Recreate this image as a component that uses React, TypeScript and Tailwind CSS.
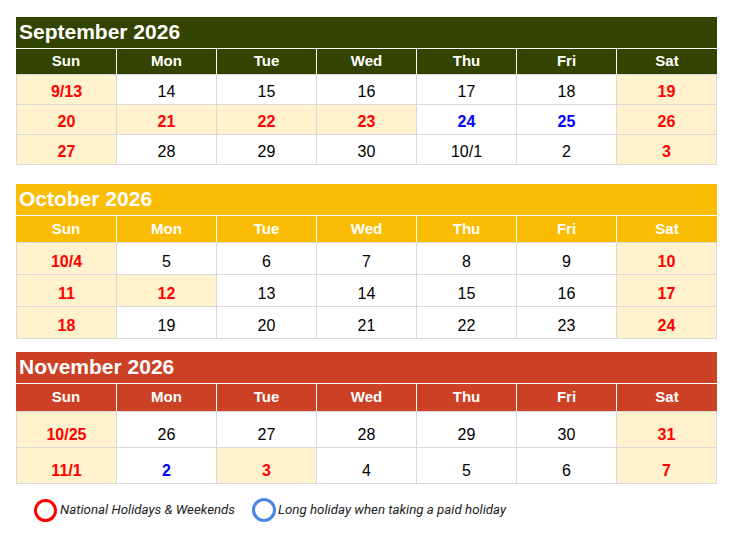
type Tone = 'n' | 'r' | 'b';
type Cell = { d: string; t?: Tone; bg?: boolean };

type Month = {
  title: string;
  color: string;
  gap: string;
  header: string;
  row: string;
  weeks: Cell[][];
};

const days = ['Sun', 'Mon', 'Tue', 'Wed', 'Thu', 'Fri', 'Sat'];

const months: Month[] = [
  {
    title: 'September 2026',
    color: 'bg-[#334400]',
    gap: 'mt-[17px]',
    header: 'h-[25px]',
    row: 'h-[30px]',
    weeks: [
      [{ d: '9/13', t: 'r', bg: true }, { d: '14' }, { d: '15' }, { d: '16' }, { d: '17' }, { d: '18' }, { d: '19', t: 'r', bg: true }],
      [
        { d: '20', t: 'r', bg: true },
        { d: '21', t: 'r', bg: true },
        { d: '22', t: 'r', bg: true },
        { d: '23', t: 'r', bg: true },
        { d: '24', t: 'b' },
        { d: '25', t: 'b' },
        { d: '26', t: 'r', bg: true },
      ],
      [{ d: '27', t: 'r', bg: true }, { d: '28' }, { d: '29' }, { d: '30' }, { d: '10/1' }, { d: '2' }, { d: '3', t: 'r', bg: true }],
    ],
  },
  {
    title: 'October 2026',
    color: 'bg-[#fbbc04]',
    gap: 'mt-[19px]',
    header: 'h-[26px]',
    row: 'h-[32px]',
    weeks: [
      [{ d: '10/4', t: 'r', bg: true }, { d: '5' }, { d: '6' }, { d: '7' }, { d: '8' }, { d: '9' }, { d: '10', t: 'r', bg: true }],
      [{ d: '11', t: 'r', bg: true }, { d: '12', t: 'r', bg: true }, { d: '13' }, { d: '14' }, { d: '15' }, { d: '16' }, { d: '17', t: 'r', bg: true }],
      [{ d: '18', t: 'r', bg: true }, { d: '19' }, { d: '20' }, { d: '21' }, { d: '22' }, { d: '23' }, { d: '24', t: 'r', bg: true }],
    ],
  },
  {
    title: 'November 2026',
    color: 'bg-[#cc4125]',
    gap: 'mt-[13px]',
    header: 'h-[27px]',
    row: 'h-[36px]',
    weeks: [
      [{ d: '10/25', t: 'r', bg: true }, { d: '26' }, { d: '27' }, { d: '28' }, { d: '29' }, { d: '30' }, { d: '31', t: 'r', bg: true }],
      [{ d: '11/1', t: 'r', bg: true }, { d: '2', t: 'b' }, { d: '3', t: 'r', bg: true }, { d: '4' }, { d: '5' }, { d: '6' }, { d: '7', t: 'r', bg: true }],
    ],
  },
];

const toneClass = (t?: Tone) => {
  if (t === 'r') return 'text-[#ff0000] font-bold';
  if (t === 'b') return 'text-[#0000ff] font-bold';
  return 'text-black';
};

const MonthTable = ({ m }: { m: Month }) => {
  return (
    <section className={`${m.gap} ml-[16px] w-[701px]`}>
      {/* Title bar */}
      <div className={`${m.color} h-[32px] border-b border-white flex items-center pl-[3px] pb-[2px]`}>
        <h2 className="text-[21px] font-bold text-white leading-none">{m.title}</h2>
      </div>
      {/* Day names */}
      <div className={`${m.color} grid grid-cols-[101px_repeat(6,100px)] ${m.header}`}>
        {days.map((day, i) => (
          <div
            key={day}
            className={`flex items-center justify-center text-[15px] font-bold text-white ${i < 6 ? 'border-r border-white' : ''}`}
          >
            {day}
          </div>
        ))}
      </div>
      {/* Weeks, text sits at the bottom like a spreadsheet cell */}
      <div className="grid grid-cols-[repeat(7,100px)] border-l border-t border-[#d9d9d9]">
        {m.weeks.flat().map((c, i) => (
          <div
            key={i}
            className={`${m.row} flex items-end justify-center pb-[3px] leading-[18px] border-r border-b border-[#d9d9d9] text-[16px] ${c.bg ? 'bg-[#fff2cc]' : 'bg-white'} ${toneClass(c.t)}`}
          >
            {c.d}
          </div>
        ))}
      </div>
    </section>
  );
};

export default function App() {
  return (
    <div className="w-[750px] h-[536px] bg-white overflow-hidden font-['Liberation_Sans',Arial,sans-serif]">
      {months.map((m) => (
        <MonthTable key={m.title} m={m} />
      ))}
      {/* Legend */}
      <div className="mt-[14px] ml-[34px] flex items-center h-[24px] font-['Roboto',sans-serif] italic text-[13.3px] text-[#222]">
        <span className="w-[23px] h-[23px] rounded-full border-[3px] border-[#ff0000]" />
        <span className="ml-[3px]">National Holidays &amp; Weekends</span>
        <span className="ml-[17px] w-[24px] h-[24px] rounded-full border-[3px] border-[#4a86e8]" />
        <span className="ml-[2px]">Long holiday when taking a paid holiday</span>
      </div>
    </div>
  );
}
